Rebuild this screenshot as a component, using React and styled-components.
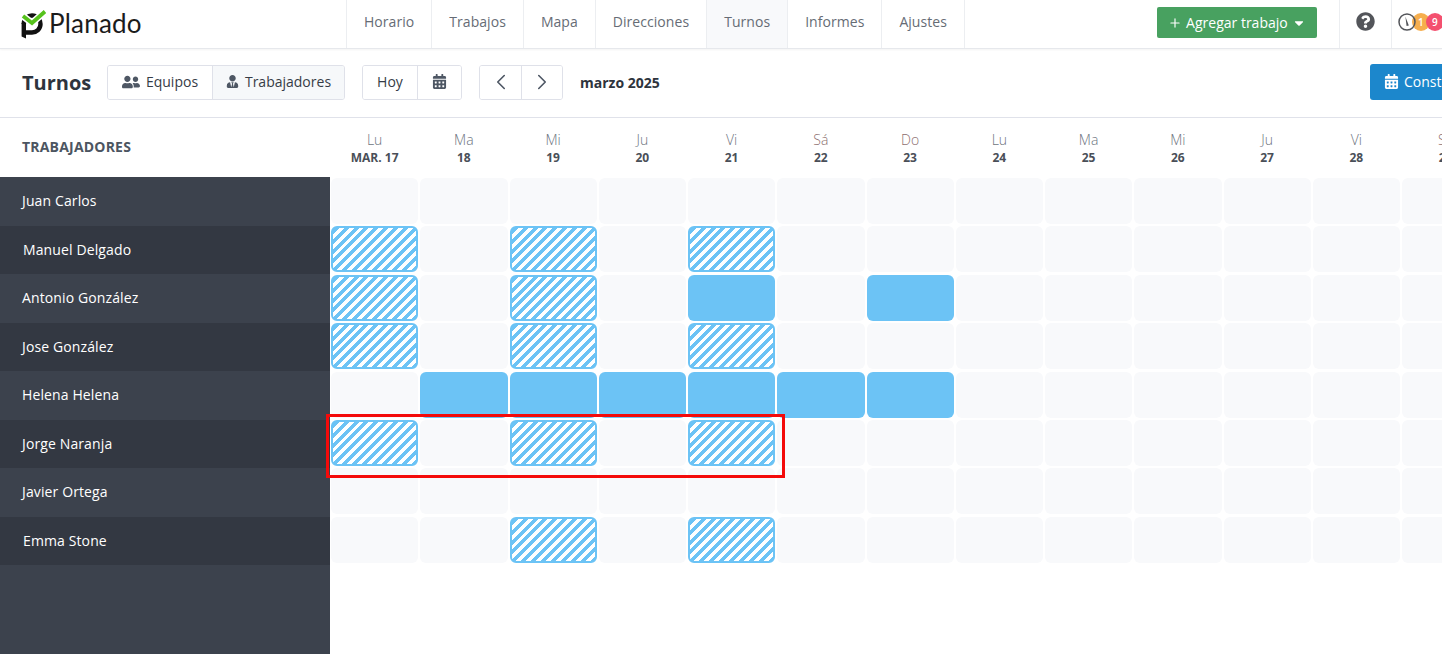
import React from "react";
import styled, { createGlobalStyle } from "styled-components";
import { FaUserFriends, FaUserTie, FaCalendarAlt, FaQuestionCircle, FaCaretDown } from "react-icons/fa";
import { ChevronLeft, ChevronRight, Plus } from "lucide-react";

const GlobalStyle = createGlobalStyle`
  html, body {
    margin: 0;
    padding: 0;
    background: #fff;
    font-family: "Open Sans", "Liberation Sans", sans-serif;
  }
  * { box-sizing: border-box; }
`;

const NAV_ITEMS = ["Horario", "Trabajos", "Mapa", "Direcciones", "Turnos", "Informes", "Ajustes"];

const DAYS = [
  ["Lu", "MAR. 17"], ["Ma", "18"], ["Mi", "19"], ["Ju", "20"], ["Vi", "21"],
  ["Sá", "22", true], ["Do", "23", true], ["Lu", "24"], ["Ma", "25"], ["Mi", "26"],
  ["Ju", "27"], ["Vi", "28"], ["Sá", "29", true], ["Do", "30", true],
];

// h = hatched shift, f = filled shift, indexed by day column
const WORKERS = [
  { name: "Juan Carlos", shifts: {} },
  { name: "Manuel Delgado", indent: 23, shifts: { 0: "h", 2: "h", 4: "h" } },
  { name: "Antonio González", shifts: { 0: "h", 2: "h", 4: "f", 6: "f" } },
  { name: "Jose González", shifts: { 0: "h", 2: "h", 4: "h" } },
  { name: "Helena Helena", shifts: { 1: "f", 2: "f", 3: "f", 4: "f", 5: "f", 6: "f" } },
  { name: "Jorge Naranja", shifts: { 0: "h", 2: "h", 4: "h" } },
  { name: "Javier Ortega", shifts: {} },
  { name: "Emma Stone", indent: 23, shifts: { 2: "h", 4: "h" } },
];

const Page = styled.div`
  width: 1442px;
  height: 654px;
  overflow: hidden;
  display: flex;
  flex-direction: column;
  color: #3d4450;
`;

const TopBar = styled.header`
  height: 49px;
  flex: none;
  display: flex;
  border-bottom: 1px solid #e6e8ec;
  box-shadow: 0 1px 2px rgba(0, 0, 0, 0.05);
`;

const LogoBox = styled.div`
  width: 346px;
  flex: none;
  display: flex;
  align-items: center;
  padding-left: 21px;
  gap: 3px;
`;

const LogoText = styled.span`
  font-family: "Lato", sans-serif;
  font-size: 26px;
  line-height: 1;
  color: #1b1b1b;
  letter-spacing: 0.2px;
  margin-top: -3px;
`;

const NavList = styled.nav`
  display: flex;
  border-left: 1px solid #eceef1;
`;

const NavItem = styled.a`
  display: flex;
  align-items: center;
  padding: 0 17px 5px;
  font-size: 14px;
  letter-spacing: 0.05px;
  color: #666c75;
  border-right: 1px solid #eceef1;
  background: ${(p) => (p.$active ? "#f8f9fb" : "transparent")};
`;

const NavRight = styled.div`
  margin-left: 192px;
  display: flex;
  align-items: stretch;
`;

const AddWrap = styled.div`
  display: flex;
  align-items: center;
  padding-right: 22px;
  border-right: 1px solid #eceef1;
`;

const AddButton = styled.button`
  width: 160px;
  height: 31px;
  margin-top: -3px;
  border: 0;
  border-radius: 2px;
  background: #48a160;
  color: #fff;
  font: 14px "Open Sans", sans-serif;
  display: flex;
  align-items: center;
  justify-content: center;
  gap: 4px;
  padding: 0;
`;

const HelpBox = styled.div`
  width: 52px;
  display: flex;
  align-items: center;
  justify-content: center;
  border-right: 1px solid #eceef1;
  color: #53555a;
  padding-bottom: 5px;
  font-size: 19px;
`;

const Status = styled.div`
  display: flex;
  align-items: center;
  padding: 0 0 4px 6px;
`;

const Badge = styled.span`
  width: 18px;
  height: 18px;
  border-radius: 50%;
  margin-left: -4px;
  flex: none;
  display: flex;
  align-items: center;
  justify-content: center;
  background: ${(p) => p.$color};
  color: #fff;
  font-size: 10px;
  font-weight: 600;
`;

const Toolbar = styled.section`
  height: 69px;
  flex: none;
  display: flex;
  align-items: center;
  padding: 0 0 1px 22px;
  border-bottom: 1px solid #e0e2ea;
  white-space: nowrap;
`;

const Title = styled.h1`
  margin: 0 16px 0 0;
  width: 69px;
  font-size: 20px;
  font-weight: 700;
  color: #2e343d;
`;

const BtnGroup = styled.div`
  display: flex;
  height: 35px;
  flex: none;
  margin-right: 17px;
  border: 1px solid #dfe1e9;
  border-radius: 3px;
  overflow: hidden;
`;

const GroupBtn = styled.div`
  width: ${(p) => p.$w}px;
  display: flex;
  align-items: center;
  justify-content: center;
  gap: 6px;
  padding-bottom: 2px;
  font-size: 14px;
  color: #363c46;
  background: ${(p) => (p.$active ? "#f6f8fa" : "#fff")};
  & + & {
    border-left: 1px solid #dfe1e9;
  }
  svg {
    color: #4e5764;
  }
`;

const MonthLabel = styled.strong`
  font-size: 14px;
  font-weight: 700;
  color: #2e343d;
  width: 790px;
  flex: none;
`;

const BlueButton = styled.button`
  height: 36px;
  margin-top: -2px;
  flex: none;
  width: 150px;
  border: 0;
  border-radius: 3px;
  background: #1c87cc;
  color: #fff;
  font: 14px "Open Sans", sans-serif;
  display: flex;
  align-items: center;
  gap: 5px;
  padding: 0 0 0 14px;
`;

const HeaderRow = styled.div`
  height: 59px;
  flex: none;
  display: flex;
`;

const WorkersHead = styled.div`
  width: 330px;
  flex: none;
  display: flex;
  align-items: center;
  padding: 0 0 3px 22px;
  font-size: 14px;
  font-weight: 700;
  letter-spacing: 0.2px;
  color: #4c5561;
`;

const DaysHead = styled.div`
  display: grid;
  grid-template-columns: repeat(14, 87.25px);
  column-gap: 2px;
  padding-left: 1px;
`;

const DayHead = styled.div`
  display: flex;
  flex-direction: column;
  align-items: center;
  justify-content: center;
  padding-top: 1px;
  white-space: nowrap;
`;

const DayName = styled.span`
  font-size: 14px;
  font-weight: 300;
  line-height: 19px;
  color: ${(p) => (p.$weekend ? "#8d6f6f" : "#6d7480")};
`;

const DayDate = styled.span`
  font-size: 12px;
  font-weight: 700;
  line-height: 17px;
  color: #4a4f58;
`;

const Body = styled.div`
  position: relative;
  flex: 1;
  display: flex;
  min-height: 0;
`;

const Sidebar = styled.aside`
  width: 330px;
  flex: none;
  background: #3c424d;
`;

const WorkerRow = styled.div`
  height: 48.5px;
  display: flex;
  align-items: center;
  padding: 0 0 1px ${(p) => p.$indent || 22}px;
  font-size: 14px;
  letter-spacing: 0.12px;
  color: #fff;
  background: ${(p) => (p.$odd ? "#333842" : "#3c424d")};
`;

const Grid = styled.div`
  display: grid;
  grid-template-columns: repeat(14, 87.25px);
  grid-auto-rows: 46px;
  column-gap: 2px;
  row-gap: 2.4px;
  padding: 1px 0 0 1px;
  align-content: start;
`;

const Cell = styled.div`
  border-radius: 6px;
  background: #f8f9fb;
  ${(p) => p.$kind === "f" && "background: #6cc3f5;"}
  ${(p) =>
    p.$kind === "h" &&
    `border: 2px solid #6cc3f5;
     background: repeating-linear-gradient(-45deg, #6cc3f5 0 3.5px, #fff 3.5px 7px);`}
`;

// the red annotation drawn over the Jorge Naranja row
const Highlight = styled.div`
  position: absolute;
  left: 326px;
  top: 237px;
  width: 459px;
  height: 64px;
  border: 3px solid #f40a0a;
  pointer-events: none;
`;

function Logo() {
  return (
    <svg width="25" height="29" viewBox="0 0 25 29" fill="none">
      <path d="M2.8 14 C2.8 8.5 7 5.5 11 5.5 C16 5.5 19.5 9.5 19.5 14 C19.5 19 15.5 22.5 11 22.5 L5 22.5" stroke="#111" strokeWidth="4.4" />
      <path d="M0.6 13 L0.6 26.5 L5 28.6 L5 13 Z" fill="#111" />
      <path d="M2 6 L11 13 L24 1.5" stroke="#fff" strokeWidth="7" />
      <path d="M2 6 L11 13 L24 1.5" stroke="#56c21c" strokeWidth="3.8" />
    </svg>
  );
}

function ClockIcon() {
  return (
    <svg width="18" height="18" viewBox="0 0 18 18" fill="none" style={{ position: "relative", zIndex: 1, flex: "none" }}>
      <circle cx="9" cy="9" r="8" stroke="#53555a" strokeWidth="1.5" />
      <path d="M7.4 3.6 L10.8 12.4 L8.6 13 Z" fill="#53555a" />
    </svg>
  );
}

export default function App() {
  return (
    <Page>
      <GlobalStyle />
      <TopBar>
        <LogoBox>
          <Logo />
          <LogoText>Planado</LogoText>
        </LogoBox>
        <NavList>
          {NAV_ITEMS.map((item) => (
            <NavItem key={item} $active={item === "Turnos"}>{item}</NavItem>
          ))}
        </NavList>
        <NavRight>
          <AddWrap>
            <AddButton>
              <Plus size={14} strokeWidth={2} />
              Agregar trabajo
              <FaCaretDown size={14} />
            </AddButton>
          </AddWrap>
          <HelpBox><FaQuestionCircle /></HelpBox>
          <Status>
            <ClockIcon />
            <Badge $color="#f6ae4d">1</Badge>
            <Badge $color="#f4506f">9</Badge>
          </Status>
        </NavRight>
      </TopBar>

      <Toolbar>
        <Title>Turnos</Title>
        <BtnGroup>
          <GroupBtn $w={104}><FaUserFriends size={18} />Equipos</GroupBtn>
          <GroupBtn $w={132} $active><FaUserTie size={13} />Trabajadores</GroupBtn>
        </BtnGroup>
        <BtnGroup>
          <GroupBtn $w={54}>Hoy</GroupBtn>
          <GroupBtn $w={44}><FaCalendarAlt size={15} /></GroupBtn>
        </BtnGroup>
        <BtnGroup>
          <GroupBtn $w={41}><ChevronLeft size={26} strokeWidth={1.5} /></GroupBtn>
          <GroupBtn $w={41}><ChevronRight size={26} strokeWidth={1.5} /></GroupBtn>
        </BtnGroup>
        <MonthLabel>marzo 2025</MonthLabel>
        <BlueButton><FaCalendarAlt size={15} />Construir horario</BlueButton>
      </Toolbar>

      <HeaderRow>
        <WorkersHead>TRABAJADORES</WorkersHead>
        <DaysHead>
          {DAYS.map(([name, date, weekend]) => (
            <DayHead key={date}>
              <DayName $weekend={weekend}>{name}</DayName>
              <DayDate>{date}</DayDate>
            </DayHead>
          ))}
        </DaysHead>
      </HeaderRow>

      <Body>
        <Sidebar>
          {WORKERS.map((w, i) => (
            <WorkerRow key={w.name} $odd={i % 2 === 1} $indent={w.indent}>{w.name}</WorkerRow>
          ))}
        </Sidebar>
        <Grid>
          {WORKERS.flatMap((w) =>
            DAYS.map((d, col) => <Cell key={w.name + col} $kind={w.shifts[col]} />)
          )}
        </Grid>
        <Highlight />
      </Body>
    </Page>
  );
}
